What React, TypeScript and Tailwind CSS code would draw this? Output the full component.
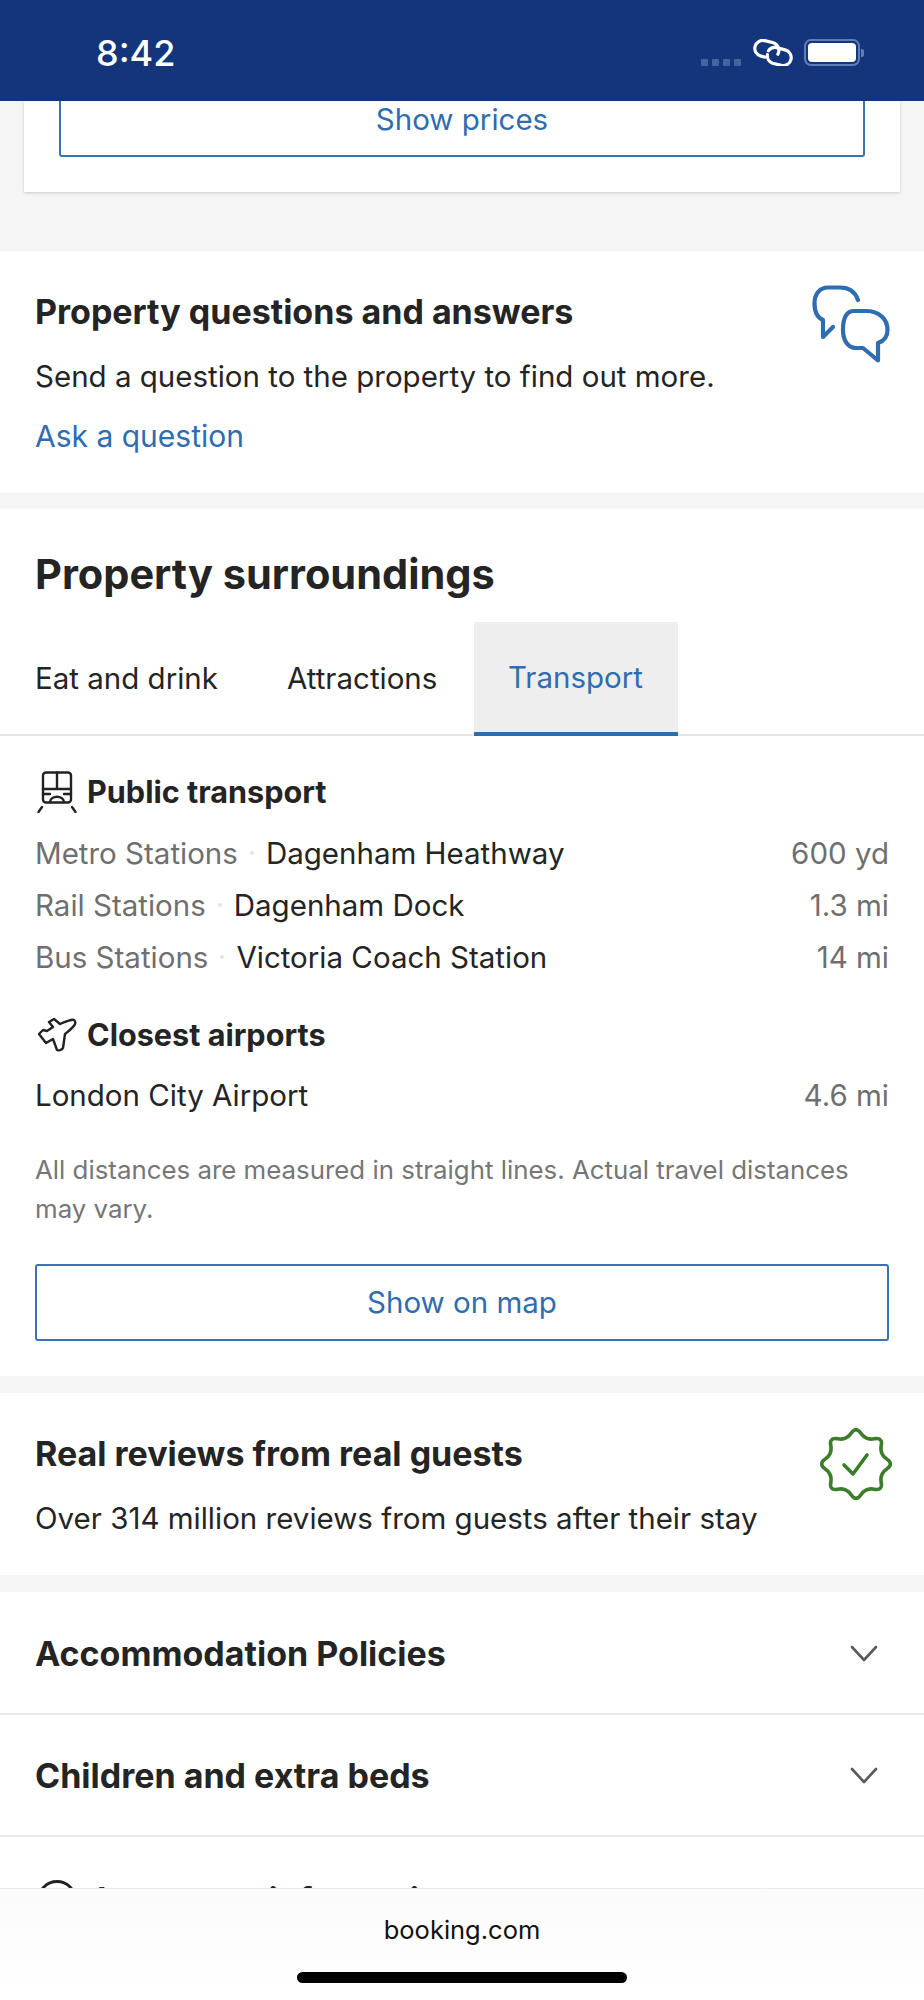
const blue = 'text-[#2f6cb0]';

function ChatIcon() {
  return (
    <svg width="78" height="78" viewBox="0 0 78 78" fill="none" stroke="#2f6cb0" strokeWidth="4.2" strokeLinecap="round" strokeLinejoin="round" className="shrink-0">
      <path d="M46 15 C43 6 36 2.5 28 2.5 H16 C8 2.5 2.5 9 2.5 18 C2.5 27 6 33 11 35 V52 L21 42" />
      <path d="M42 26 H54 C67 26 75.5 34 75.5 45 C75.5 52 72 56 66 58 V75.5 L51 63 H44 C35 63 31 54 31 45 C31 34 34 26 42 26 Z" />
    </svg>
  );
}

function TrainIcon() {
  return (
    <svg width="40" height="42" viewBox="0 0 40 42" fill="none" stroke="#222" strokeWidth="2.4" strokeLinecap="round" strokeLinejoin="round" className="shrink-0">
      <rect x="6" y="1.5" width="28" height="30" rx="3" />
      <path d="M20 1.5 V18 M6 18 H34 M6 23 H13 M27 23 H34 M13 31 C14 24 26 24 27 31" />
      <path d="M5 36 L1.5 41 M35 36 L38.5 41" />
    </svg>
  );
}

function PlaneIcon() {
  return (
    <svg width="40" height="36" viewBox="0 0 40 36" fill="none" stroke="#222" strokeWidth="2.4" strokeLinecap="round" strokeLinejoin="round" className="shrink-0">
      <path d="M34 3 C37 2 39 4 38 7 C37 10 33 13 28 17 L26 31 C25 33 21 34 20 33 L16 22 L9 26 L2 17 L6 13 L10 14 L16 10 L12 5 L17 2 L23 7 C27 5 31 4 34 3 Z" />
    </svg>
  );
}

function VerifiedIcon() {
  // eight pointed seal, curved through the midpoints of its corners
  const corners = Array.from({ length: 16 }, (_, i) => {
    const a = ((-90 + i * 22.5) * Math.PI) / 180;
    const r = i % 2 === 0 ? 38 : 25.5;
    return [36 + r * Math.cos(a), 36 + r * Math.sin(a)];
  });
  const mid = (p: number[], q: number[]) => `${((p[0] + q[0]) / 2).toFixed(1)} ${((p[1] + q[1]) / 2).toFixed(1)}`;
  let d = `M${mid(corners[15], corners[0])}`;
  corners.forEach((c, i) => {
    d += ` Q${c[0].toFixed(1)} ${c[1].toFixed(1)} ${mid(c, corners[(i + 1) % 16])}`;
  });
  return (
    <svg width="72" height="72" viewBox="0 0 72 72" fill="none" stroke="#3c7d2a" strokeWidth="3.6" strokeLinecap="round" strokeLinejoin="round" className="shrink-0">
      <path d={d + ' Z'} />
      <path d="M24 37 L33 46 L47 27" />
    </svg>
  );
}

function Chevron() {
  return (
    <svg width="28" height="17" viewBox="0 0 28 17" fill="none" stroke="#5a5a5a" strokeWidth="2.6" strokeLinecap="round" strokeLinejoin="round" className="shrink-0">
      <path d="M2 2 L14 15 L26 2" />
    </svg>
  );
}

function StatusIcons() {
  return (
    <div className="flex items-center">
      <div className="flex gap-[4px] mt-[20px]">
        <i className="w-[7px] h-[7px] rounded-[1px] bg-[#45649f]" />
        <i className="w-[7px] h-[7px] rounded-[1px] bg-[#45649f]" />
        <i className="w-[7px] h-[7px] rounded-[1px] bg-[#45649f]" />
        <i className="w-[7px] h-[7px] rounded-[1px] bg-[#45649f]" />
      </div>
      <svg width="44" height="27" viewBox="0 0 44 27" fill="none" stroke="#fff" strokeWidth="3.2" strokeLinecap="round" className="ml-[10px]">
        <g transform="rotate(14 22 14)">
          <path d="M27 14 A8 8 0 0 0 20 4 H11 A8 8 0 0 0 11 20 H15" />
          <path d="M17 13 A8 8 0 0 1 24 8 H33 A8 8 0 0 1 33 24 H24 A8 8 0 0 1 17 17" />
        </g>
      </svg>
      <div className="flex items-center ml-[9px]">
        <div className="w-[56px] h-[27px] rounded-[7px] border-[2px] border-[#5c7db5] p-[2px]">
          <div className="w-full h-full rounded-[4px] bg-white" />
        </div>
        <div className="w-[3px] h-[8px] ml-[1px] rounded-r-[2px] bg-[#5c7db5]" />
      </div>
    </div>
  );
}

function Station({ label, name, dist }: { label: string; name: string; dist: string }) {
  return (
    <div className="flex items-center justify-between h-[52px] text-[29.5px]">
      <div className="flex items-center">
        <span className="text-[#6f6f6f]">{label}</span>
        <i className="w-[4px] h-[4px] mx-[12px] rounded-full bg-[#e4e4e4]" />
        <span className="text-[#242424]">{name}</span>
      </div>
      <span className="text-[#6f6f6f]">{dist}</span>
    </div>
  );
}

function Gap() {
  return <div className="h-[16px] bg-[#f5f5f5]" />;
}

export default function App() {
  return (
    <div className="flex flex-col w-[924px] h-[2000px] overflow-hidden bg-white font-[Inter,sans-serif] text-[#242424]">
      <header className="shrink-0 flex items-center justify-between h-[101px] pl-[96px] pr-[60px] pt-[4px] bg-[#12357b]">
        <span className="text-white text-[36px] font-medium">8:42</span>
        <StatusIcons />
      </header>

      <main className="flex-1 min-h-0 overflow-hidden">
        <div className="h-[150px] bg-[#f5f5f5]">
          <div className="h-[91px] mx-[24px] px-[35px] bg-white overflow-hidden shadow-[0_1px_3px_rgba(0,0,0,0.18)]">
            <button className={`flex items-center justify-center w-full h-[76px] -mt-[20px] border-2 border-[#3a72b3] rounded-[3px] text-[29.5px] ${blue}`}>Show prices</button>
          </div>
        </div>

        <section className="flex justify-between pl-[35px] pr-[34px] h-[242px] bg-white">
          <div className="pt-[41px]">
            <h2 className="h-[40px] leading-[40px] text-[34px] font-bold">Property questions and answers</h2>
            <p className="h-[40px] leading-[40px] mt-[24px] text-[29.5px]">Send a question to the property to find out more.</p>
            <a className={`block h-[40px] leading-[40px] mt-[20px] text-[30px] ${blue}`}>Ask a question</a>
          </div>
          <div className="pt-[34px]"><ChatIcon /></div>
        </section>
        <Gap />

        <section className="bg-white">
          <h2 className="h-[48px] leading-[48px] mt-[41px] px-[35px] text-[41.5px] font-bold">Property surroundings</h2>
          <div className="flex h-[114px] mt-[24px] border-b-2 border-[#e6e6e6] text-[29.5px]">
            <div className="flex items-center w-[253px] px-[35px]">Eat and drink</div>
            <div className="flex items-center w-[221px] pl-[34px]">Attractions</div>
            <div className={`flex items-center w-[204px] h-[114px] pl-[34px] bg-[#eeeeee] border-b-4 border-[#2f6cb0] ${blue}`}>Transport</div>
          </div>

          <div className="px-[35px] pb-[35px]">
            <div className="flex items-center gap-[10px] h-[40px] mt-[36px] pl-[2px] text-[30.6px] font-bold">
              <TrainIcon />
              <span>Public transport</span>
            </div>
            <div className="mt-[15px]">
              <Station label="Metro Stations" name="Dagenham Heathway" dist="600 yd" />
              <Station label="Rail Stations" name="Dagenham Dock" dist="1.3 mi" />
              <Station label="Bus Stations" name="Victoria Coach Station" dist="14 mi" />
            </div>

            <div className="flex items-center gap-[10px] h-[40px] mt-[32px] pl-[2px] text-[30.6px] font-bold">
              <PlaneIcon />
              <span>Closest airports</span>
            </div>
            <div className="flex items-center justify-between h-[52px] mt-[14px] text-[29.5px]">
              <span>London City Airport</span>
              <span className="text-[#6f6f6f]">4.6 mi</span>
            </div>

            <p className="mt-[29px] text-[25.85px] leading-[39px] text-[#767676]">All distances are measured in straight lines. Actual travel distances may vary.</p>

            <button className={`flex items-center justify-center w-full h-[77px] mt-[36px] border-2 border-[#3a72b3] rounded-[3px] text-[29.5px] ${blue}`}>Show on map</button>
          </div>
        </section>
        <div className="h-[17px] bg-[#f5f5f5]" />

        <section className="flex justify-between h-[182px] pl-[35px] pr-[32px] bg-white">
          <div className="pt-[41px]">
            <h2 className="h-[40px] leading-[40px] text-[34px] font-bold">Real reviews from real guests</h2>
            <p className="h-[40px] leading-[40px] mt-[24px] text-[29.5px]">Over 314 million reviews from guests after their stay</p>
          </div>
          <div className="pt-[35px]"><VerifiedIcon /></div>
        </section>
        <div className="h-[17px] bg-[#f5f5f5]" />

        <div className="flex items-center justify-between h-[123px] pt-[1px] pl-[35px] pr-[46px] border-b-2 border-[#e9e9e9] text-[34px] font-bold">
          <span>Accommodation Policies</span>
          <Chevron />
        </div>
        <div className="flex items-center justify-between h-[122px] pl-[35px] pr-[46px] border-b-2 border-[#e9e9e9] text-[34px] font-bold">
          <span>Children and extra beds</span>
          <Chevron />
        </div>
        <div className="flex items-center gap-[20px] h-[122px] pt-[3px] pl-[37px] text-[34px] leading-[26px] font-bold">
          <svg width="40" height="40" viewBox="0 0 40 40" fill="none" stroke="#222" strokeWidth="2.8" strokeLinecap="round" className="shrink-0">
            <circle cx="20" cy="20" r="18.5" />
            <path d="M20 18 V29 M20 11 V12" />
          </svg>
          <span>Important information</span>
        </div>
      </main>

      <footer className="shrink-0 flex flex-col items-center h-[112px] pt-[25px] border-t border-[#ececec] bg-gradient-to-b from-[#fbfbfb] to-white">
        <span className="h-[32px] leading-[32px] text-[25.5px] text-[#111]">booking.com</span>
        <div className="w-[330px] h-[11px] mt-[26px] rounded-full bg-black" />
      </footer>
    </div>
  );
}
